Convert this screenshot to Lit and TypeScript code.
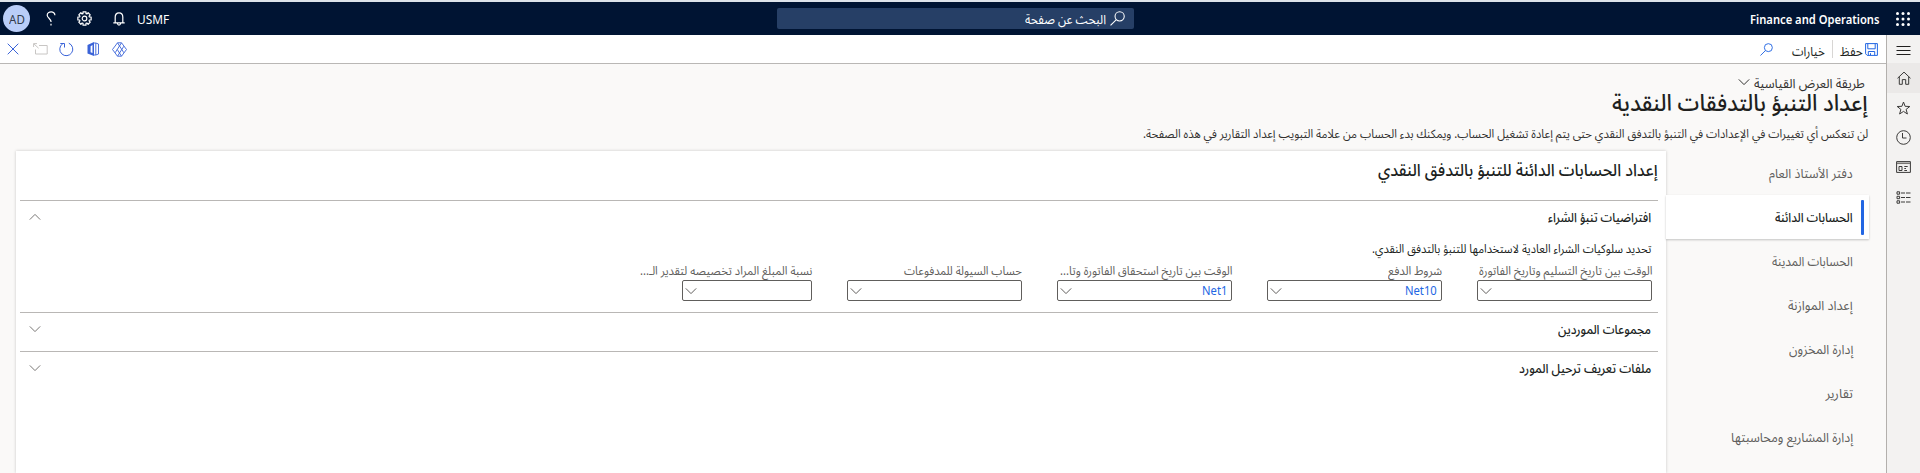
import { LitElement, html, css, svg } from "lit";
import { customElement, property } from "lit/decorators.js";

const FONT = css`"Segoe UI", "Noto Sans", "Noto Sans Arabic", "DejaVu Sans", sans-serif`;

/** One line of text that is fitted to a given width. */
@customElement("fit-text")
class FitText extends LitElement {
  @property({ type: Number }) w = 100;
  static styles = css`
    :host { display: inline-block; white-space: nowrap; flex: none; }
    span { display: inline-block; transform-origin: 100% 50%; }
    :host([ltr]) span { transform-origin: 0 50%; }
  `;
  render() {
    return html`<span><slot></slot></span>`;
  }
  firstUpdated() {
    const s = this.renderRoot.querySelector("span") as HTMLElement;
    const natural = s.offsetWidth;
    this.style.width = this.w + "px";
    if (natural) s.style.transform = `scaleX(${this.w / natural})`;
  }
}

const icon = (w: number, h: number, body: unknown, cls = "") =>
  html`<svg class="ico ${cls}" width=${w} height=${h} viewBox="0 0 ${w} ${h}" fill="none" stroke="currentColor">${body}</svg>`;

const chevron = (up = false) =>
  icon(12, 8, up ? svg`<path d="M.8 6.600 6 1.400l5.200 5.200"/>` : svg`<path d="M.8 1.400 6 6.600l5.200-5.200"/>`, "chev");

const lens = (s: number) =>
  html`<svg class="ico" width=${s} height=${s} viewBox="0 0 14 14" fill="none" stroke="currentColor"><circle cx="9" cy="5" r="4.300"/><path d="M5.900 8.100.5 13.500"/></svg>`;

const gearPath = (() => {
  const pts: string[] = [];
  for (let i = 0; i < 8; i++) {
    const a = (i * Math.PI) / 4;
    for (const [d, r] of [[-0.3, 5.1], [-0.22, 6.8], [0.22, 6.8], [0.3, 5.1]]) {
      pts.push(`${(7.5 + r * Math.cos(a + d)).toFixed(2)} ${(7.5 + r * Math.sin(a + d)).toFixed(2)}`);
    }
  }
  return `M${pts.join("L")}Z`;
})();

const waffle = icon(14, 14, svg`<g fill="#fff" stroke="none">${[1.5, 7, 12.5].map((y) => [1.5, 7, 12.5].map((x) => svg`<circle cx=${x} cy=${y} r="1.500"/>`))}</g>`);
const help = icon(10, 15, svg`<path stroke-width="1.200" d="M8.900 4.200C8.900 2 7.200.8 5.200.8S1.200 2.200 1.200 4.200c0 2.500 3.800 3.600 3.800 6.400V11M5 12.800v1.600"/>`);
const gear = icon(15, 15, svg`<path stroke-width="1.200" stroke-linejoin="round" d=${gearPath}/><circle cx="7.500" cy="7.500" r="2.300" stroke-width="1.200"/>`);
const bell = icon(12, 14, svg`<path stroke-width="1.200" d="M2.200 10.500V5C2.200 2.500 3.800.9 6 .9S9.800 2.500 9.800 5v5.500M.3 10.800h11.400M4.400 11.500c.2 1.100.8 1.600 1.600 1.600s1.400-.5 1.600-1.600"/>`);

const close = icon(12, 12, svg`<path d="M.7.700l10.600 10.600M11.300.700.700 11.300"/>`);
const popout = icon(15, 12, svg`<g stroke="#c8c6c4"><path d="M6 2.500h8.200v8.500H2.500V6.500M.8.800l4.800 4.400M.6 4V.6h3.400"/></g>`);
const refresh = icon(15, 15, svg`<path d="M9.800 1.200a6.500 6.500 0 1 1-6.300.7M1.300 1.500h4.200v4"/>`);
const office = icon(12, 14, svg`<path fill="currentColor" stroke="none" d="M7 0v14L.5 11.600V2.900zM5.500 3 3.600 4.200v6l1.900.9z" fill-rule="evenodd"/><path d="M7 1h1.800l2.700 1v10l-2.700 1H7M8.800 1v12" stroke-width=".9"/>`);
const diamond = icon(15, 15, svg`<g stroke-width=".9" stroke-linejoin="round"><path d="M5.500.8h4l5 6.700-5 6.700h-4l-5-6.700z"/><path d="M5.500.8l6.300 9.900M9.500.8 3.200 10.700M5.500 14.200l6.300-9.900M9.500 14.200 5.300 7.500"/></g>`);
const save = icon(13, 13, svg`<path d="M.6.600h11.800v11.800H2.200L.6 10.800zM2.800.800v5h7.400v-5M3.300 12.200V8.500h6.400v3.700M5.500 12v-1.800"/>`);

const rail = [
  icon(15, 11, svg`<path d="M.5 1.500h14M.5 5.500h14M.5 9.500h14" stroke="#201f1e"/>`),
  icon(14, 14, svg`<path d="M.5 7.300 7 1.100l6.500 6.200M2.300 5.800v7.500h3V8.600h3.400v4.700h3V5.800"/>`),
  icon(15, 14, svg`<path d="M7.500 1l1.600 4.300 4.700.2-3.700 2.900 1.300 4.600-3.900-2.600-3.900 2.600 1.300-4.600-3.700-2.900 4.700-.2z"/>`),
  icon(15, 15, svg`<circle cx="7.500" cy="7.500" r="6.800"/><path d="M6.500 3v5h4"/>`),
  icon(15, 12, svg`<path d="M.6.600h13.800v10.800H.6z"/><path d="M1 2.300h13" stroke="#797775" stroke-width="1.500"/><path d="M3 5.500h3v4H3zM8.300 5.500h3.400M8.300 7.500h1.700M8.300 9.500h2.700"/>`),
  icon(15, 13, svg`<path d="M1 .8h2.600v2.400H1zM1 5.300h2.600v2.400H1zM1 9.800h2.600v2.400H1zM5 2h4M10 2h4.500M5 6.500h4M10 6.500h4.500M5 11h4M10 11h4.500"/>`),
];

const TABS: [string, number][] = [
  ["دفتر الأستاذ العام", 84],
  ["الحسابات الدائنة", 78],
  ["الحسابات المدينة", 81],
  ["إعداد الموازنة", 65],
  ["إدارة المخزون", 64],
  ["تقارير", 28],
  ["إدارة المشاريع ومحاسبتها", 122],
];

const FIELDS: [string, number, string, number, string][] = [
  ["الوقت بين تاريخ التسليم وتاريخ الفاتورة", 173, "", 0, ""],
  ["شروط الدفع", 54, "Net10", 32, ""],
  ["الوقت بين تاريخ استحقاق الفاتورة وتا...", 172, "Net1", 25, ""],
  ["حساب السيولة للمدفوعات", 118, "", 0, ""],
  ["نسبة المبلغ المراد تخصيصه لتقدير الـ...", 172, "", 0, "narrow"],
];

@customElement("app-root")
class AppRoot extends LitElement {
  static styles = css`
    :host { display: block; height: 473px; overflow: hidden; background: #faf9f8; color: #201f1e; font: 13px/20px ${FONT}; }
    * { box-sizing: border-box; }
    .ico { display: block; flex: none; }
    .page { direction: rtl; display: flex; flex-direction: column; height: 473px; border-top: 2px solid #dde3ea; }
    .nav { height: 33px; flex: none; background: #001433; color: #fff; display: grid; grid-template-columns: 760px 1fr 760px; align-items: center; }
    .brand { display: flex; align-items: center; gap: 17px; padding-right: 10px; font-weight: 600; }
    .search { width: 357px; height: 21px; margin-right: 26px; border-radius: 2px; background: #263f66; display: flex; align-items: center; gap: 4px; padding-right: 9px; }
    .user { display: flex; direction: ltr; align-items: center; padding-left: 3px; }
    .avatar { width: 27px; height: 27px; border-radius: 50%; background: #b9cdf8; color: #333b4a; display: flex; align-items: center; justify-content: center; margin-right: 16px; }
    .user .ico { margin-right: 21px; }
    .user .ico + .ico + .ico { margin-right: 12px; }
    .main { flex: 1; display: flex; min-height: 0; }
    .rail { width: 34px; flex: none; background: #f3f2f1; border-left: 1px solid #b3b0ad; color: #3b3a39; display: flex; flex-direction: column; }
    .rail div { height: 29.8px; display: flex; align-items: center; justify-content: center; }
    .rail div:first-child { height: 28px; padding-top: 3px; }
    .rail div:nth-child(2) { background: #ebe9e8; }
    .body { flex: 1; min-width: 0; display: flex; flex-direction: column; }
    .tools { height: 29px; flex: none; background: #fff; border-bottom: 1px solid #b9b7b5; display: flex; justify-content: space-between; }
    .grp { display: flex; align-items: center; color: #2266e3; }
    .grp.r { padding-right: 8px; }
    .grp.r > fit-text:nth-child(2) { margin-right: 2px; }
    .grp.r > .ico:last-child { margin-right: 19px; }
    .grp.l { direction: ltr; padding-left: 7px; gap: 13px; color: #3a63d8; }
    .grp.l .ico:first-child { margin-right: 1px; }
    .grp.l .ico:nth-child(2) { margin-right: -2px; }
    .grp fit-text { color: #201f1e; padding-top: 3px; }
    .sep { width: 1px; height: 18px; background: #d8d6d4; margin: 0 7px; }
    .head { padding: 9px 18px 0 0; height: 87px; flex: none; display: flex; flex-direction: column; }
    .view { display: flex; align-items: center; gap: 4px; height: 20px; padding-right: 3px; color: #323130; line-height: 18px; }
    .view .ico { margin-bottom: 3px; }
    h1 { margin: 0; font-size: 23px; line-height: 18px; font-weight: 500; height: 20px; }
    .note { font-size: 12px; height: 20px; margin-top: 11px; color: #323130; }
    .work { flex: 1; display: flex; min-height: 0; padding-right: 17px; }
    .tabs { width: 203px; flex: none; z-index: 1; }
    .tab { height: 44px; display: flex; align-items: center; padding-right: 16px; color: #605e5c; }
    .tab.on { background: #fff; color: #201f1e; font-weight: 500; padding-right: 5px; gap: 8px; box-shadow: 0 1px 2px rgba(0,0,0,.22); }
    .tab.on::before { content: ""; width: 3px; height: 35px; border-radius: 1px; background: #2266e3; }
    .card { width: 1650px; flex: none; background: #fff; padding: 0 8px 0 4px; box-shadow: 0 0 3px rgba(0,0,0,.2); }
    h2 { margin: 0; font-size: 17px; font-weight: 500; line-height: 38px; height: 49px; }
    .sec { border-top: 1px solid #b9b7b5; padding-right: 7px; }
    .bar { height: 38px; display: flex; justify-content: space-between; align-items: center; padding: 0 0 6px 9px; font-weight: 500; }
    .bar .ico { color: #797775; }
    .hint { font-size: 12px; height: 22px; }
    .fields { display: flex; gap: 35px; height: 51px; margin-right: -1px; }
    .field { width: 175px; color: #605e5c; font-size: 12px; }
    .lbl { height: 19px; }
    .box { height: 21px; border: 1px solid #605e5c; border-radius: 2px; display: flex; align-items: center; justify-content: space-between; padding: 0 4px 0 2px; color: #2266e3; font-size: 13px; }
    .box .ico { color: #605e5c; }
    .box fit-text { line-height: 17px; display: block; }
    .narrow .box { width: 130px; }
  `;

  render() {
    return html`<div class="page">
      <div class="nav">
        <div class="brand">${waffle}<fit-text w="129">Finance and Operations</fit-text></div>
        <div class="search">${lens(15)}<fit-text w="81">البحث عن صفحة</fit-text></div>
        <div class="user">
          <div class="avatar"><fit-text ltr w="16">AD</fit-text></div>
          ${help}${gear}${bell}
          <fit-text ltr w="32">USMF</fit-text>
        </div>
      </div>
      <div class="main">
        <div class="rail">${rail.map((r) => html`<div>${r}</div>`)}</div>
        <div class="body">
          <div class="tools">
            <div class="grp r">${save}<fit-text w="23">حفظ</fit-text><div class="sep"></div><fit-text w="33">خيارات</fit-text>${lens(13)}</div>
            <div class="grp l">${close}${popout}${refresh}${office}${diamond}</div>
          </div>
          <div class="head">
            <div class="view"><fit-text w="111">طريقة العرض القياسية</fit-text>${chevron()}</div>
            <h1><fit-text w="256">إعداد التنبؤ بالتدفقات النقدية</fit-text></h1>
            <div class="note"><fit-text w="725">لن تنعكس أي تغييرات في الإعدادات في التنبؤ بالتدفق النقدي حتى يتم إعادة تشغيل الحساب. ويمكنك بدء الحساب من علامة التبويب إعداد التقارير في هذه الصفحة.</fit-text></div>
          </div>
          <div class="work">
            <div class="tabs">${TABS.map(([t, w], i) => html`<div class="tab ${i === 1 ? "on" : ""}"><fit-text w=${w}>${t}</fit-text></div>`)}</div>
            <div class="card">
              <h2><fit-text w="280">إعداد الحسابات الدائنة للتنبؤ بالتدفق النقدي</fit-text></h2>
              <div class="sec">
                <div class="bar"><fit-text w="103">افتراضيات تنبؤ الشراء</fit-text>${chevron(true)}</div>
                <div class="hint"><fit-text w="279">تحديد سلوكيات الشراء العادية لاستخدامها للتنبؤ بالتدفق النقدي.</fit-text></div>
                <div class="fields">${FIELDS.map(([l, w, v, vw, c]) => html`<div class="field ${c}"><div class="lbl"><fit-text w=${w}>${l}</fit-text></div><div class="box"><span>${v ? html`<fit-text w=${vw}>${v}</fit-text>` : ""}</span>${chevron()}</div></div>`)}</div>
              </div>
              <div class="sec"><div class="bar"><fit-text w="93">مجموعات الموردين</fit-text>${chevron()}</div></div>
              <div class="sec"><div class="bar"><fit-text w="132">ملفات تعريف ترحيل المورد</fit-text>${chevron()}</div></div>
            </div>
          </div>
        </div>
      </div>
    </div>`;
  }
}
